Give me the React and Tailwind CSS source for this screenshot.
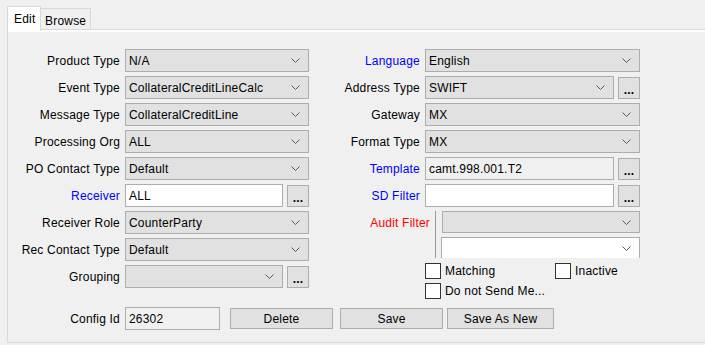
import React from 'react';

const font = { fontFamily: '"Liberation Sans", Arial, sans-serif' };

const Chevron = () => (
  <svg width="9" height="5" viewBox="0 0 9 5" className="shrink-0">
    <polyline points="0.5,0.5 4.5,4.5 8.5,0.5" fill="none" stroke="#5a5a5a" strokeWidth="1" />
  </svg>
);

const Combo = ({ value = '', width, white = false, h = 'h-[23px]' }) => (
  <div
    className={`${h} ${width} ${white ? 'bg-white' : 'bg-[#e1e1e1]'} border border-[#adadad] flex items-center pl-[3px] pr-[8px] shrink-0`}
  >
    <span className="flex-1 text-[12px] text-black truncate">{value}</span>
    <Chevron />
  </div>
);

const Field = ({ value = '', width, disabled = false }) => (
  <div
    className={`h-[23px] ${width} ${disabled ? 'bg-[#f0f0f0]' : 'bg-white'} border border-[#adadad] flex items-center pl-[3px] shrink-0`}
  >
    <span className="text-[12px] text-black">{value}</span>
  </div>
);

const Dots = () => (
  <div className="h-[22px] w-[22px] bg-[#e1e1e1] border border-[#adadad] flex items-end justify-center pb-[3px] shrink-0">
    <span className="text-[12px] leading-[10px] font-bold text-black">...</span>
  </div>
);

const Row = ({ label, color = 'text-black', labelW = 'w-[112px]', children }) => (
  <div className="flex items-center h-[23px]">
    <div className={`${labelW} text-right text-[12px] ${color}`}>{label}</div>
    <div className="ml-[5px] flex items-center gap-[4px]">{children}</div>
  </div>
);

const Check = ({ label }) => (
  <div className="flex items-center h-[16px]">
    <div className="w-[16px] h-[16px] bg-white border border-[#333333]" />
    <span className="ml-[4px] text-[12px] text-black">{label}</span>
  </div>
);

const Btn = ({ label, width, className = '' }) => (
  <div className={`h-[21px] ${width} bg-[#e1e1e1] border border-[#adadad] flex items-center justify-center text-[12px] text-black ${className}`}>
    {label}
  </div>
);

export default function App() {
  return (
    <div style={font} className="w-[705px] h-[345px] bg-[#f0f0f0] overflow-hidden pt-[6px] pl-[7px] tracking-[0.2px]">
      {/* tabs */}
      <div className="flex items-end h-[23px]">
        <div className="relative z-10 h-[25px] w-[34px] -mb-[2px] bg-white border border-b-0 border-[#d9d9d9] pl-[6px] pt-[3px] text-[12px] text-black">
          Edit
        </div>
        <div className="h-[21px] w-[50px] border border-b-0 border-l-0 border-[#d9d9d9] pl-[4px] pt-[3px] text-[12px] text-black">
          Browse
        </div>
      </div>

      {/* panel */}
      <div className="w-[720px] h-[314px] border border-[#d9d9d9]">
        <div className="h-full border-t-2 border-white pt-[17px]">
          <div className="flex items-start">
            {/* left column */}
            <div className="flex flex-col gap-[4px] w-[301px]">
              <Row label="Product Type"><Combo value="N/A" width="w-[184px]" /></Row>
              <Row label="Event Type"><Combo value="CollateralCreditLineCalc" width="w-[184px]" /></Row>
              <Row label="Message Type"><Combo value="CollateralCreditLine" width="w-[184px]" /></Row>
              <Row label="Processing Org"><Combo value="ALL" width="w-[184px]" /></Row>
              <Row label="PO Contact Type"><Combo value="Default" width="w-[184px]" /></Row>
              <Row label="Receiver" color="text-[#0000ff]">
                <Field value="ALL" width="w-[158px]" />
                <Dots />
              </Row>
              <Row label="Receiver Role"><Combo value="CounterParty" width="w-[184px]" /></Row>
              <Row label="Rec Contact Type"><Combo value="Default" width="w-[184px]" /></Row>
              <Row label="Grouping">
                <Combo value="" width="w-[158px]" />
                <Dots />
              </Row>
            </div>

            {/* right column */}
            <div className="flex flex-col">
              <div className="flex flex-col gap-[4px]">
                <Row label="Language" color="text-[#0000ff]" labelW="w-[111px]"><Combo value="English" width="w-[215px]" /></Row>
                <Row label="Address Type" labelW="w-[111px]">
                  <Combo value="SWIFT" width="w-[189px]" />
                  <Dots />
                </Row>
                <Row label="Gateway" labelW="w-[111px]"><Combo value="MX" width="w-[215px]" /></Row>
                <Row label="Format Type" labelW="w-[111px]"><Combo value="MX" width="w-[215px]" /></Row>
                <Row label="Template" color="text-[#0000ff]" labelW="w-[111px]">
                  <Field value="camt.998.001.T2" width="w-[189px]" disabled />
                  <Dots />
                </Row>
                <Row label="SD Filter" color="text-[#0000ff]" labelW="w-[111px]">
                  <Field value="" width="w-[189px]" />
                  <Dots />
                </Row>
              </div>

              {/* audit filter */}
              <div className="flex mt-[4px] h-[47px] overflow-hidden">
                <div className="w-[121px] h-[23px] flex items-center justify-end text-[12px] text-[#ff0000]">Audit Filter</div>
                <div className="ml-[5px] w-px h-full bg-[#9a9a9a]" />
                <div className="ml-[5px] flex flex-col gap-[4px]">
                  <div className="ml-px"><Combo value="" width="w-[198px]" h="h-[22px]" /></div>
                  <Combo value="" width="w-[199px]" white />
                </div>
              </div>

              {/* checkboxes */}
              <div className="ml-[116px] mt-[5px] flex flex-col gap-[4px]">
                <div className="flex">
                  <div className="w-[130px]"><Check label="Matching" /></div>
                  <Check label="Inactive" />
                </div>
                <Check label="Do not Send Me..." />
              </div>
            </div>
          </div>

          {/* bottom row */}
          <div className="flex items-center h-[23px] mt-[8px]">
            <div className="w-[112px] text-right text-[12px] text-black">Config Id</div>
            <div className="ml-[5px]"><Field value="26302" width="w-[95px]" disabled /></div>
            <Btn label="Delete" width="w-[103px]" className="ml-[10px]" />
            <Btn label="Save" width="w-[103px]" className="ml-[7px]" />
            <Btn label="Save As New" width="w-[107px]" className="ml-[4px]" />
          </div>
        </div>
      </div>
    </div>
  );
}
